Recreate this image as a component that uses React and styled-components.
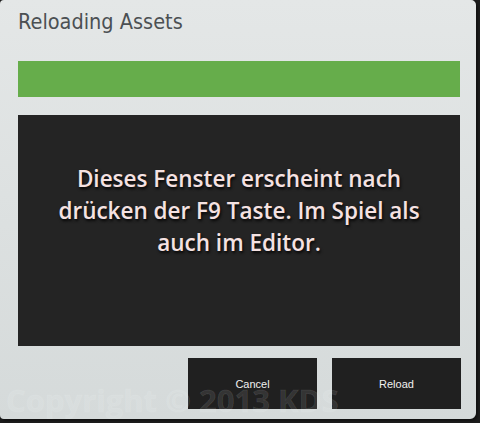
import styled, { createGlobalStyle } from "styled-components";

const GlobalStyle = createGlobalStyle`
  html, body {
    margin: 0;
    padding: 0;
    background: #1c1c1c;
  }
  #root {
    width: 480px;
    height: 423px;
  }
`;

export default function App() {
  return (
    <>
      <GlobalStyle />
      <Dialog>
        <Title>Reloading Assets</Title>
        <Progress />
        <Message>
          Dieses Fenster erscheint nach drücken der F9 Taste. Im Spiel als
          auch im Editor.
        </Message>
        <Footer>
          <Button>Cancel</Button>
          <Button>Reload</Button>
        </Footer>
        <Watermark>Copyright © 2013 KDS</Watermark>
      </Dialog>
    </>
  );
}

//Styles
const Dialog = styled.div`
  position: relative;
  box-sizing: border-box;
  width: 476px;
  height: 419px;
  padding: 0 16px 10px 18px;
  display: flex;
  flex-direction: column;
  background: linear-gradient(to bottom, #e4e7e7, #d5dada);
  border-radius: 4px 5px 6px 4px;
  box-shadow: 2px 2px 2px rgba(0, 0, 0, 0.35);
  overflow: hidden;
`;

const Title = styled.h1`
  margin: 0;
  height: 61px;
  padding-top: 9px;
  box-sizing: border-box;
  font-family: "DejaVu Sans Condensed", "DejaVu Sans", sans-serif;
  font-weight: normal;
  font-size: 21.5px;
  color: #4b5053;
`;

const Progress = styled.div`
  height: 36px;
  width: 442px;
  background: #66ad4b;
`;

const Message = styled.div`
  margin-top: 18px;
  width: 442px;
  height: 231px;
  box-sizing: border-box;
  padding: 48px 16px 0;
  background: #242424;
  text-align: center;
  font-family: "Open Sans", sans-serif;
  font-weight: 600;
  font-size: 22.5px;
  line-height: 32px;
  color: #f5e2e2;
  text-shadow: 1px 2px 3px rgba(0, 0, 0, 0.9);
`;

const Footer = styled.div`
  margin-top: 12px;
  display: flex;
  justify-content: flex-end;
  gap: 15px;
  width: 443px;
`;

const Button = styled.button`
  width: 129px;
  height: 51px;
  border: none;
  background: #202020;
  color: #f0f0f0;
  font-family: "Liberation Sans", sans-serif;
  font-size: 11px;
  padding: 0;
`;

const Watermark = styled.div`
  position: absolute;
  left: 6px;
  bottom: 3px;
  line-height: 1;
  font-family: "Open Sans", sans-serif;
  font-weight: 700;
  font-size: 31px;
  color: rgba(255, 255, 255, 0.1);
  -webkit-text-stroke: 1px rgba(255, 255, 255, 0.08);
  pointer-events: none;
  white-space: nowrap;
`;
